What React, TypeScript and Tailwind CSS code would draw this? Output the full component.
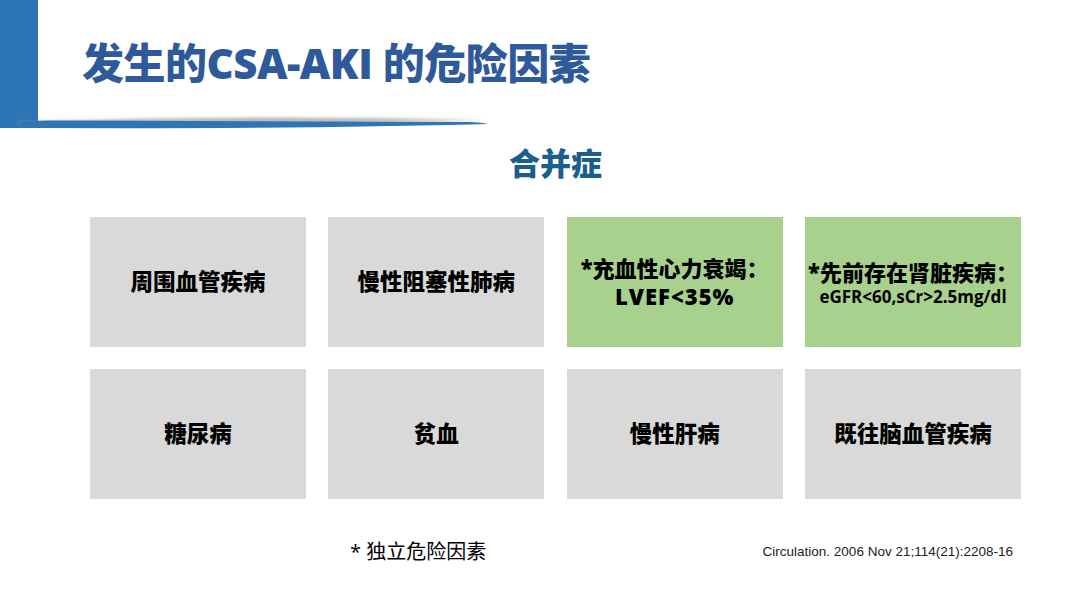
import React from "react";

const cjk = "font-['Open_Sans','Noto_Sans_CJK_SC',sans-serif]";

function Box({ green, children }: { green?: boolean; children: React.ReactNode }) {
  return (
    <div
      className={`flex h-[130px] flex-col items-center justify-center text-center font-extrabold text-black ${
        green ? "bg-[#a9d18e]" : "bg-[#d9d9d9]"
      }`}
    >
      {children}
    </div>
  );
}

export default function App() {
  return (
    <div className={`relative h-[608px] w-[1080px] overflow-hidden bg-white ${cjk}`}>
      {/* header */}
      <div className="relative h-[130px]">
        <div className="absolute left-0 top-0 h-[128px] w-[38px] bg-[#2e75b6]" />
        <svg className="absolute left-0 top-[112px]" width="500" height="20" viewBox="0 0 500 20">
          <defs>
            <filter id="sh" x="-5%" y="-100%" width="110%" height="300%">
              <feGaussianBlur stdDeviation="1.8" />
            </filter>
          </defs>
          <path d="M18 10 Q 250 2 487 8 Q 250 14 18 12 Z" fill="#9a9a9a" opacity="0.7" filter="url(#sh)" />
          <path d="M18 10 Q 30 8 60 8.5 L 470 10 Q 488 11 487 12 Q 300 17 38 16 Q 20 14 18 10 Z" fill="#2e75b6" />
        </svg>
        <div className="absolute left-[82px] top-[33px] text-[42px] font-extrabold leading-[60px] tracking-[-0.5px] text-[#2e5a9c]">
          发生的CSA-AKI 的危险因素
        </div>
      </div>

      {/* subtitle */}
      <div className="ml-[90px] mt-[12px] w-[931px] text-center text-[31px] font-extrabold leading-[42px] text-[#1b5e8e]">
        合并症
      </div>

      {/* grid */}
      <div className="ml-[90px] mt-[33px] grid w-[931px] grid-cols-4 gap-x-[22.3px] gap-y-[22px]">
        <Box>
          <span className="text-[22.5px] leading-[28px]">周围血管疾病</span>
        </Box>
        <Box>
          <span className="text-[22.5px] leading-[28px]">慢性阻塞性肺病</span>
        </Box>
        <Box green>
          <span className="text-[22px] leading-[28px]">*充血性心力衰竭：</span>
          <span className="text-[22px] leading-[28px] tracking-[1px]">LVEF&lt;35%</span>
        </Box>
        <Box green>
          <span className="mt-[2px] text-[22px] leading-[28px]">*先前存在肾脏疾病：</span>
          <span className="text-[17px] font-bold leading-[22px]">eGFR&lt;60,sCr&gt;2.5mg/dl</span>
        </Box>
        <Box>
          <span className="text-[22.5px] leading-[28px]">糖尿病</span>
        </Box>
        <Box>
          <span className="text-[22.5px] leading-[28px]">贫血</span>
        </Box>
        <Box>
          <span className="text-[22.5px] leading-[28px]">慢性肝病</span>
        </Box>
        <Box>
          <span className="text-[22.5px] leading-[28px]">既往脑血管疾病</span>
        </Box>
      </div>

      {/* footer */}
      <div className="mt-[39px] flex items-center">
        <div className="ml-[350px] text-[20px] leading-[28px] text-black">* 独立危险因素</div>
        <div className="ml-auto mr-[67px] font-['Liberation_Sans',sans-serif] text-[13.5px] leading-[20px] text-[#222]">
          Circulation. 2006 Nov 21;114(21):2208-16
        </div>
      </div>
    </div>
  );
}
